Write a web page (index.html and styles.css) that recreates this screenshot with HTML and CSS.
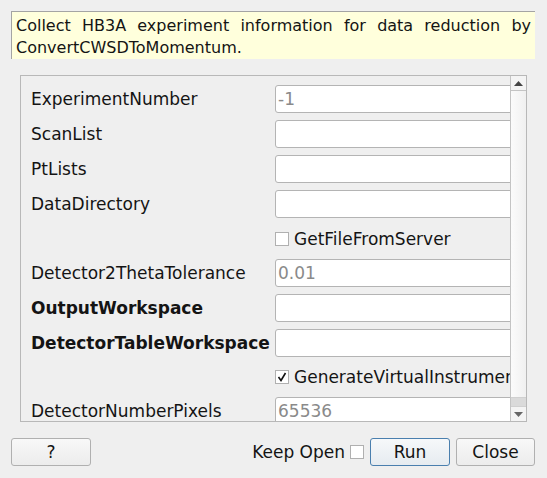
FILE: index.html
```html
<!DOCTYPE html>
<html>
<head>
<meta charset="utf-8">
<link rel="stylesheet" href="styles.css">
</head>
<body>
<div class="dialog">
  <div class="desc">Collect HB3A experiment information for data reduction by ConvertCWSDToMomentum.</div>
  <div class="frame">
    <div class="content">
      <div class="props">
        <div class="label">ExperimentNumber</div>
        <div class="input"><span class="ph">-1</span></div>
        <div class="label">ScanList</div>
        <div class="input"></div>
        <div class="label">PtLists</div>
        <div class="input"></div>
        <div class="label">DataDirectory</div>
        <div class="input"></div>
        <div class="label"></div>
        <div class="check-row r1"><span class="box"></span><span>GetFileFromServer</span></div>
        <div class="label">Detector2ThetaTolerance</div>
        <div class="input"><span class="ph">0.01</span></div>
        <div class="label bold">OutputWorkspace</div>
        <div class="input"></div>
        <div class="label bold">DetectorTableWorkspace</div>
        <div class="input"></div>
        <div class="label"></div>
        <div class="check-row r2"><span class="box checked"><svg width="12" height="12" viewBox="0 0 12 12"><path d="M2.5 6 L5 9.5 L9.5 2" fill="none" stroke="#111" stroke-width="1.6"/></svg></span><span>GenerateVirtualInstrument</span></div>
        <div class="label">DetectorNumberPixels</div>
        <div class="input"><span class="ph">65536</span></div>
      </div>
    </div>
    <div class="scrollbar">
      <div class="sb-btn up"><svg width="9" height="5" viewBox="0 0 9 5"><path d="M0 5 L4.5 0 L9 5 Z" fill="#444"/></svg></div>
      <div class="sb-thumb"></div>
      <div class="sb-track"></div>
      <div class="sb-btn down"><svg width="9" height="5" viewBox="0 0 9 5"><path d="M0 0 L9 0 L4.5 5 Z" fill="#666"/></svg></div>
    </div>
  </div>
  <div class="buttons">
    <button class="btn help">?</button>
    <div class="spacer"></div>
    <span class="keep">Keep Open</span>
    <span class="box keep-box"></span>
    <button class="btn run">Run</button>
    <button class="btn close">Close</button>
  </div>
</div>
</body>
</html>
```

FILE: styles.css
```css
html, body {
  margin: 0;
  padding: 0;
  background: #efefef;
}
body {
  width: 547px;
  height: 478px;
  overflow: hidden;
  font-family: "DejaVu Sans", sans-serif;
  font-size: 17px;
  color: #141414;
}
.dialog {
  padding: 11px 12px 0 11px;
  display: flex;
  flex-direction: column;
}
.desc {
  background: #ffffdc;
  border-top: 1px solid #a4a4a4;
  border-left: 1px solid #a4a4a4;
  box-sizing: border-box;
  height: 48px;
  padding: 3px 4px 0 4px;
  font-size: 16px;
  line-height: 22px;
  text-align: justify;
}
.frame {
  margin: 16px 8px 0 9px;
  height: 347px;
  box-sizing: border-box;
  border: 1px solid #b8b8b8;
  display: flex;
  overflow: hidden;
}
.content {
  flex: 1;
  overflow: hidden;
  padding: 9px 0 0 10px;
}
.props {
  display: grid;
  grid-template-columns: 244px 280px;
  row-gap: 7px;
  align-items: center;
}
.label {
  white-space: nowrap;
}
.bold {
  font-weight: bold;
}
.input {
  height: 28px;
  box-sizing: border-box;
  background: #fff;
  border: 1px solid #b4b4b4;
  border-radius: 3px;
  padding-left: 2px;
  line-height: 26px;
}
.ph {
  color: #8a8a8a;
}
.check-row {
  display: flex;
  align-items: center;
  gap: 5px;
  white-space: nowrap;
}
.r1 { height: 27px; }
.r2 { height: 26px; }
.box {
  width: 14px;
  height: 14px;
  box-sizing: border-box;
  border: 1px solid #b0b0b0;
  background: #fff;
  display: inline-flex;
  align-items: center;
  justify-content: center;
  flex: none;
}
.scrollbar {
  width: 15px;
  flex: none;
  display: flex;
  flex-direction: column;
  border-left: 1px solid #c4c4c4;
  background: #e8e8e8;
}
.sb-btn {
  height: 14px;
  display: flex;
  align-items: center;
  justify-content: center;
  background: #f4f4f4;
}
.sb-btn.up {
  border-bottom: 1px solid #c4c4c4;
}
.sb-thumb {
  height: 307px;
  background: linear-gradient(to right, #fbfbfb, #f0f0f0);
  border-bottom: 1px solid #d0d0d0;
  box-sizing: border-box;
}
.sb-track {
  flex: 1;
  background: #dadada;
}
.sb-btn.down {
  height: 14px;
  border-top: 1px solid #d0d0d0;
}
.buttons {
  margin-top: 16px;
  display: flex;
  align-items: center;
}
.spacer {
  flex: 1;
}
.btn {
  font-family: "DejaVu Sans", sans-serif;
  font-size: 17px;
  color: #141414;
  height: 28px;
  width: 80px;
  box-sizing: border-box;
  border: 1px solid #b0b0b0;
  border-radius: 3px;
  background: linear-gradient(#f8f8f8, #ececec);
  padding: 0;
}
.keep {
  margin-right: 5px;
}
.keep-box {
  margin-right: 6px;
}
.run {
  border-color: #4a7fae;
  background: linear-gradient(#f6f8fa, #e6ebf0);
}
.close {
  margin-left: 6px;
  width: 79px;
}
```
